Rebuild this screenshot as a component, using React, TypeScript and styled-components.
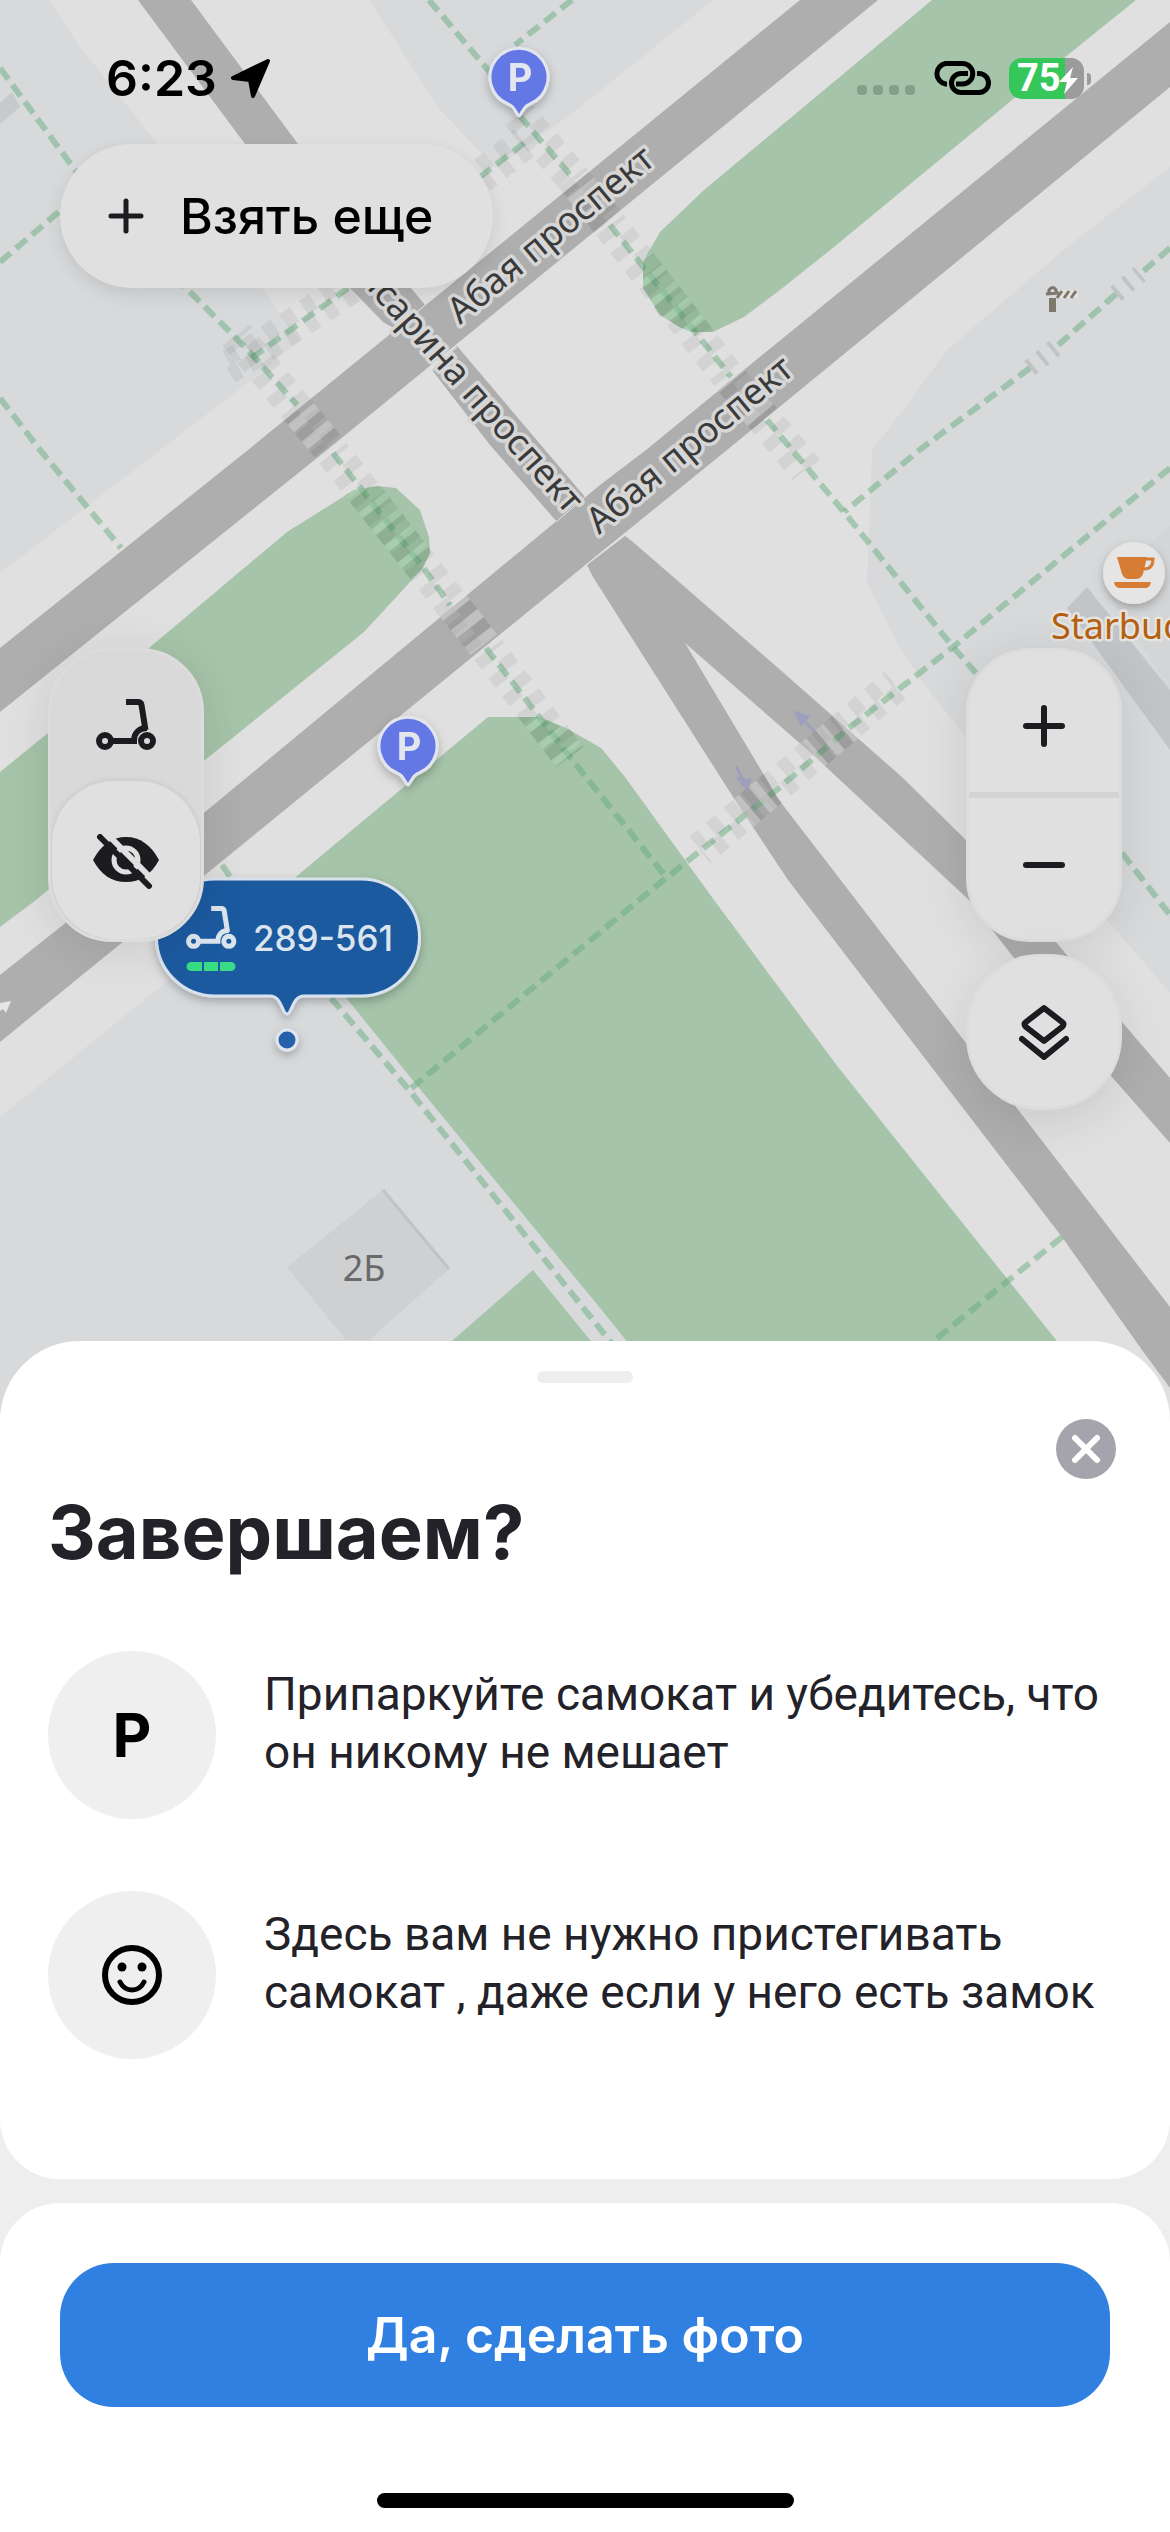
import React from "react";
import styled, { createGlobalStyle } from "styled-components";

const colors = {
  ink: "#1c1c20",
  panel: "#e0e0e0",
  panelMuted: "#d9d9d9",
  ground: "#e0e0e0",
  block: "#d7d9db",
  road: "#aeaeae",
  park: "#a6c4aa",
  blue: "#2f80e1",
  bubble: "#1f5aa0",
  pin: "#6478e4",
};

const GlobalStyle = createGlobalStyle`
  *, *::before, *::after { box-sizing: border-box; }
  body {
    margin: 0;
    background: #ffffff;
    color: #232228;
    font-family: Inter, Roboto, "Liberation Sans", sans-serif;
  }
  button { font: inherit; color: inherit; border: 0; padding: 0; cursor: pointer; }
  svg { display: block; }
`;

const Screen = styled.div`
  position: relative;
  display: flex;
  flex-direction: column;
  min-height: 100vh;
  overflow: hidden;
  background: #ffffff;
`;

const MapLayer = styled.div`
  position: absolute;
  inset: 0 0 auto 0;
  svg { width: 100%; height: auto; }
  text { font-family: "Noto Sans", sans-serif; }
`;

const Overlay = styled.div`
  position: relative;
  flex: 1;
  display: flex;
  flex-direction: column;
  align-items: stretch;
`;

const StatusBar = styled.header`
  display: flex;
  justify-content: space-between;
  align-items: center;
  height: 144px;
  padding: 12px 86px 0 106px;
`;

const StatusGroup = styled.div<{ $gap: number }>`
  display: flex;
  align-items: center;
  gap: ${(p) => p.$gap}px;
`;

const Clock = styled.time`
  font-size: 50px;
  font-weight: 600;
  line-height: 60px;
  color: #000;
`;

const SignalDots = styled.div`
  display: flex;
  gap: 6px;
  padding-top: 24px;
`;

const SignalDot = styled.i`
  width: 10px;
  height: 10px;
  border-radius: 4px;
  background: #839f87;
`;

const Battery = styled.div`
  position: relative;
  width: 75px;
  height: 41px;
  padding-left: 8px;
  border-radius: 13px;
  background: linear-gradient(to right, #35c759 75%, #9a9b9a 75%);
  color: #fff;
  font: 700 38px/41px Roboto, Inter, sans-serif;
  &::after {
    content: "";
    position: absolute;
    right: -7px;
    top: 15px;
    width: 4px;
    height: 12px;
    border-radius: 0 4px 4px 0;
    background: #9a9b9a;
  }
  svg { position: absolute; inset: 0; }
`;

const TakeMoreButton = styled.button`
  display: flex;
  align-items: center;
  align-self: flex-start;
  gap: 36px;
  height: 144px;
  margin-left: 60px;
  padding: 0 60px 0 48px;
  border-radius: 72px;
  background: ${colors.panel};
  box-shadow: 0 6px 18px rgba(0, 0, 0, 0.1);
  color: #000;
  font-size: 50px;
  font-weight: 500;
`;

const Controls = styled.div`
  display: flex;
  justify-content: space-between;
  align-items: flex-start;
  padding: 360px 48px 230px;
`;

const ControlColumn = styled.div`
  display: flex;
  flex-direction: column;
  gap: 12px;
`;

const Pill = styled.div<{ $muted?: boolean }>`
  display: flex;
  flex-direction: column;
  width: 156px;
  height: 294px;
  padding: ${(p) => (p.$muted ? "0 1px" : "0")};
  overflow: hidden;
  border: 3px solid #dcdcdc;
  border-radius: 64px;
  background: ${(p) => (p.$muted ? colors.panelMuted : colors.panel)};
  box-shadow: 0 6px 48px rgba(0, 0, 0, 0.1);
`;

const PillButton = styled.button`
  display: grid;
  place-items: center;
  flex: 1;
  padding-bottom: 8px;
  background: transparent;
`;

const ScooterButton = styled(PillButton)`
  padding: 16px 0 0;
`;

const HideButton = styled(PillButton)`
  flex: 0 0 158px;
  padding: 4px 0 0;
  border-radius: 62px;
  background: ${colors.panel};
  box-shadow: 0 0 6px rgba(0, 0, 0, 0.1);
`;

const ZoomInButton = styled(PillButton)`
  flex: 0 0 147px;
  padding: 8px 0 0;
  border-bottom: 6px solid #d3d3d3;
`;

const RoundButton = styled.button`
  display: grid;
  place-items: center;
  width: 156px;
  height: 156px;
  border: 3px solid #dcdcdc;
  border-radius: 74px;
  background: ${colors.panel};
  box-shadow: 0 12px 48px rgba(0, 0, 0, 0.1);
`;

const Sheet = styled.section`
  position: relative;
  display: flex;
  flex-direction: column;
  gap: 24px;
  border-radius: 80px 80px 0 0;
  overflow: hidden;
  background: #eeeeee;
`;

const InfoCard = styled.div`
  display: flex;
  flex-direction: column;
  padding: 30px 48px 120px;
  border-radius: 0 0 60px 60px;
  background: #ffffff;
`;

const Handle = styled.div`
  align-self: center;
  width: 96px;
  height: 12px;
  border-radius: 6px;
  background: #eeeeee;
`;

const CloseButton = styled.button`
  display: grid;
  place-items: center;
  align-self: flex-end;
  width: 60px;
  height: 60px;
  margin: 36px 6px 0 0;
  border-radius: 50%;
  background: #a5a3ab;
`;

const Title = styled.h1`
  margin: 6px 0 72px;
  font-size: 74px;
  font-weight: 700;
  line-height: 94px;
`;

const Tips = styled.ul`
  display: flex;
  flex-direction: column;
  gap: 72px;
  margin: 0;
  padding: 0;
  list-style: none;
`;

const Tip = styled.li`
  display: flex;
  align-items: flex-start;
  gap: 48px;
`;

const TipBadge = styled.span`
  display: grid;
  place-items: center;
  flex: none;
  width: 168px;
  height: 168px;
  border-radius: 50%;
  background: #efefef;
  color: #000;
  font-size: 60px;
  font-weight: 700;
`;

const TipText = styled.p`
  margin: 0;
  padding-top: 14px;
  font-family: Roboto, Inter, sans-serif;
  font-size: 46px;
  line-height: 58px;
`;

const ActionCard = styled.div`
  display: flex;
  flex-direction: column;
  gap: 86px;
  padding: 60px 60px 24px;
  border-radius: 60px 60px 0 0;
  background: #ffffff;
`;

const PrimaryButton = styled.button`
  height: 144px;
  border-radius: 54px;
  background: ${colors.blue};
  color: #ffffff;
  font-size: 50px;
  font-weight: 600;
`;

const HomeBar = styled.div`
  align-self: center;
  width: 417px;
  height: 15px;
  border-radius: 8px;
  background: #000;
`;

const ScooterShape = ({ color }: { color: string }) => (
  <g fill="none" stroke={color} strokeWidth="6">
    <circle cx="9" cy="42" r="6" />
    <circle cx="51" cy="42" r="6" />
    <path d="M15 42H38C38 34 43 29 51 29" />
    <path d="M30 3H42Q45 3 45.500 6L49.500 31" />
  </g>
);

const ParkingPin = ({ x, y }: { x: number; y: number }) => (
  <g transform={`translate(${x} ${y})`} filter="url(#markerShadow)">
    <path
      d="M0 39C-2 39-4 29-11 27A29 29 0 1 1 11 27C4 29 2 39 0 39Z"
      fill={colors.pin}
      stroke="#e3e5ee"
      strokeWidth="3"
    />
    <text x="1" y="14" textAnchor="middle" fontSize="38" fontWeight="700" fill="#e4e6ee" style={{ fontFamily: "Inter, sans-serif" }}>
      P
    </text>
  </g>
);

const parks = [
  "M932 0H1136L1012 100L834 247L780 290L744 317L713 332H692L681 328L660 315L643 288V263L648 253L660 232L704 190Z",
  "M354 490L377 486L396 488L420 510L429 537L430 553L423 568L364 632L205 760L36 900L0 927V772L48 733L149 648L287 532Z",
  "M488 717H540L568 729L601 748L625 777L714 900L838 1067L1080 1370H650L600 1308L415 1083L348 1000L268 900Z",
  "M533 1270L453 1340L440 1400H640L590 1340Z",
];

const roads = [
  "M138 0H191L298 144L411 288L425 305L397 330L383 322L350 288L245 144Z",
  "M432 370L457 346L585 497L557 522L490 445Z",
  "M800 0H878L327 450L0 712V648L248 450Z",
  "M1170 22V87L727 450L600 553L205 875L0 1042V975L205 812L600 485L646 450Z",
  "M587 565L625 536L633 542L777 667L903 778L966 840L1056 942L1122 1022L1170 1078V1143L1112 1077L1014 958L969 900L811 753L685 643L779 800L856 900L966 1043L1016 1107L1170 1307V1388L1142 1350L1062 1237L788 880L735 800L593 577Z",
];

const footpaths = [
  "M0 68L75 170L186 288L245 347L297 405",
  "M0 262L61 210",
  "M0 398L40 450L121 548M222 865L231 878M331 998L409 1090L625 1360",
  "M429 0L488 70L519 115L572 177M610 225L731 377M767 420L844 512L953 647L976 673M1122 853L1170 915",
  "M572 0L515 45",
  "M524 143L480 177M348 288L249 360",
  "M1170 248L1140 274M1116 294L1056 347M1030 368L922 448L844 512",
  "M1170 468L953 647L849 728L779 788L685 863L639 900L409 1090",
  "M333 453L425 570L450 605M486 648L570 757L666 877",
  "M1062 1237L925 1348",
];

const crossings = [
  { d: "M519 115L572 177", falling: true },
  { d: "M524 143L480 177", falling: false },
  { d: "M350 287L249 355L226 368", falling: false },
  { d: "M236 335L328 447", falling: true },
  { d: "M333 453L484 645", falling: true },
  { d: "M488 650L570 757", falling: true },
  { d: "M572 177L610 225", falling: true },
  { d: "M610 225L728 376", falling: true },
  { d: "M731 380L790 450L806 470", falling: true },
  { d: "M895 685L700 850", falling: false },
];

const Crossing = ({ d, falling }: { d: string; falling: boolean }) => (
  <g fill="none">
    <g stroke="#000" strokeOpacity="0.055" strokeWidth="17" strokeDasharray="12 11">
      <path d={d} transform={falling ? "translate(-7 5)" : "translate(5 7)"} />
      <path d={d} transform={falling ? "translate(7 -5)" : "translate(-5 -7)"} strokeDashoffset="8" />
    </g>
    <g clipPath="url(#paved)" strokeWidth="34">
      <path d={d} stroke="#000" strokeOpacity="0.04" />
      <path d={d} stroke="#fff" strokeOpacity="0.3" strokeDasharray="10 12" strokeDashoffset="8" />
    </g>
    <g clipPath="url(#lawns)" strokeWidth="34">
      <path d={d} stroke="#2a6a3a" strokeOpacity="0.12" />
      <path d={d} stroke="#d8ffe0" strokeOpacity="0.28" strokeDasharray="7 14" />
    </g>
  </g>
);

const MapDrawing = () => (
  <svg viewBox="0 0 1170 1500" role="img" aria-label="Карта">
    <defs>
      <filter id="markerShadow" x="-30%" y="-30%" width="160%" height="170%">
        <feDropShadow dx="0" dy="4" stdDeviation="5" floodOpacity="0.25" />
      </filter>
      <clipPath id="paved">
        {roads.map((d) => (
          <path key={d} d={d} />
        ))}
      </clipPath>
      <clipPath id="lawns">
        {parks.map((d) => (
          <path key={d} d={d} />
        ))}
      </clipPath>
    </defs>
    <rect width="1170" height="1500" fill={colors.ground} />

    <g fill={colors.block}>
      <path d="M0 0H50L77 43L153 138L262 288L300 340L245 385L0 573Z" />
      <path d="M369 0H713L570 115L496 168L440 110Z" />
      <path d="M1170 167L1067 247L947 350L903 410L872 450L867 583L899 647L926 687L966 737L1113 927L1170 993Z" />
      <path d="M0 1117L165 983L268 900L650 1370L650 1500H0Z" />
    </g>

    <path d="M0 103L12 92L20 107L0 124Z" fill="#c8c9ca" />
    <path d="M1106 590L1170 525V690Z" fill="#d3d5d6" />
    <path d="M1087 587L1067 608L1170 750V690Z" fill="#c2c5c7" />
    <path d="M383 1190L449 1269L369 1340H346L287 1267Z" fill="#cfd0d1" />
    <path d="M383 1190L449 1269" stroke="#c1c2c3" strokeWidth="3" />

    <g fill={colors.park}>
      {parks.map((d) => (
        <path key={d} d={d} />
      ))}
    </g>
    <g fill={colors.road}>
      {roads.map((d) => (
        <path key={d} d={d} />
      ))}
    </g>
    <path d="M397 330L425 305M432 371L457 347M556 522L587 495M586 565L626 533" stroke="#e4e4e4" strokeWidth="1" />

    {footpaths.map((d) => (
      <path key={d} d={d} fill="none" stroke="#5faa77" strokeOpacity="0.46" strokeWidth="6" strokeDasharray="14 7" />
    ))}
    {crossings.map((c) => (
      <Crossing key={c.d} {...c} />
    ))}
    <path
      d="M1116 294L1140 274M1030 368L1056 347"
      fill="none"
      stroke="#000"
      strokeOpacity="0.1"
      strokeWidth="18"
      strokeDasharray="4 10"
    />

    <g fill="#9a9cc0" stroke="#9a9cc0" strokeWidth="3" opacity="0.8">
      <path d="M796 713L808 717L801 724Z" />
      <path d="M801 718L814 731" />
      <path d="M739 779L750 780L747 789Z" />
      <path d="M736 766L744 782" />
    </g>
    <path d="M0 1003L11 1001L6 1013L3 1009L0 1011Z" fill="#e6e6e6" />

    <g transform="translate(1045 286)">
      <rect x="4" y="12" width="7" height="14" fill="#7d776c" />
      <path d="M4 8V4Q8-1 11 4V8M1 8L14 7" fill="none" stroke="#7d776c" strokeWidth="3" />
      <path d="M14 8H33" stroke="#e6e3dd" strokeWidth="8" />
      <path d="M12 12L17 5M19 12L24 5M26 12L31 5" stroke="#7d776c" strokeWidth="3" />
    </g>

    <g fontSize="36" fill="#3a3a3a" stroke="#d6d6d6" strokeWidth="7" strokeLinejoin="round" paintOrder="stroke">
      <text transform="translate(460 325) rotate(-39.500)">Абая проспект</text>
      <text transform="translate(599 535) rotate(-39.500)">Абая проспект</text>
      <text transform="translate(567 515) rotate(48.500)" textAnchor="end">Алтынсарина проспект</text>
    </g>
    <text x="364" y="1281" textAnchor="middle" fontSize="36" fill="#696969">2Б</text>

    <g filter="url(#markerShadow)">
      <circle cx="1134" cy="573" r="31" fill="#e5e5e5" />
    </g>
    <g fill="#d67c35">
      <path d="M1117 557H1147L1143 574Q1141 579 1136 579H1129Q1124 579 1122 574Z" />
      <path d="M1146 559H1153Q1153 569 1144 569" fill="none" stroke="#d67c35" strokeWidth="3" />
      <path d="M1114 582H1151Q1150 588 1145 588H1120Q1115 588 1114 582Z" />
    </g>
    <text x="1134" y="639" textAnchor="middle" fontSize="36" fill="#b5600f" stroke="#e6e4e0" strokeWidth="5" strokeLinejoin="round" paintOrder="stroke">
      Starbucks
    </text>

    <ParkingPin x={519} y={77} />
    <ParkingPin x={408} y={746} />

    <g filter="url(#markerShadow)">
      <path
        d="M215 879H361A58 58 0 0 1 361 996H304C292 996 292 1014 287 1014C282 1014 282 996 270 996H215A58 58 0 0 1 215 879Z"
        fill={colors.bubble}
        stroke="#d8e2ee"
        strokeWidth="3"
      />
      <circle cx="287" cy="1040" r="10" fill="#2560ab" stroke="#dfe5ee" strokeWidth="3" />
    </g>
    <g transform="translate(186 906) scale(.84)">
      <ScooterShape color="#dce4ee" />
    </g>
    <g fill="#37dc86">
      <path d="M191 962H202V971H191A4 4 0 0 1 191 962Z" />
      <rect x="204" y="962" width="14" height="9" />
      <path d="M220 962H231A4 4 0 0 1 231 971H220Z" />
    </g>
    <text x="253" y="951" fontSize="35" fontWeight="500" fill="#dce4ee" style={{ fontFamily: "Inter, sans-serif" }}>
      289-561
    </text>
  </svg>
);

const PlusIcon = ({ size, weight }: { size: number; weight: number }) => (
  <svg width={size} height={size} viewBox={`0 0 ${size} ${size}`} aria-hidden="true">
    <path
      d={`M${size / 2} 3V${size - 3}M3 ${size / 2}H${size - 3}`}
      stroke={colors.ink}
      strokeWidth={weight}
      strokeLinecap="round"
    />
  </svg>
);

const MinusIcon = () => (
  <svg width="42" height="42" viewBox="0 0 42 42" aria-hidden="true">
    <path d="M3 21H39" stroke={colors.ink} strokeWidth="6" strokeLinecap="round" />
  </svg>
);

const ScooterIcon = () => (
  <svg width="60" height="51" viewBox="0 0 60 51" aria-hidden="true">
    <ScooterShape color={colors.ink} />
  </svg>
);

const EyeOffIcon = () => (
  <svg width="66" height="56" viewBox="0 0 66 56" aria-hidden="true">
    <path d="M0 26C8 11 19 3 33 3S58 11 66 26C58 41 47 48 33 48S8 41 0 26Z" fill={colors.ink} />
    <circle cx="33" cy="26" r="12" fill="none" stroke={colors.panel} strokeWidth="5" />
    <path d="M14 0L63 49" stroke={colors.panel} strokeWidth="6" />
    <path d="M7 3L56 52" stroke={colors.ink} strokeWidth="6" strokeLinecap="round" />
  </svg>
);

const LayersIcon = () => (
  <svg width="50" height="56" viewBox="0 0 50 56" fill="none" stroke={colors.ink} strokeWidth="6" strokeLinecap="round" strokeLinejoin="round" aria-hidden="true">
    <path d="M25 4L43 18Q46 20 43 23L25 37L7 23Q4 20 7 18Z" />
    <path d="M3 35L25 53L47 35" />
  </svg>
);

const LocationIcon = () => (
  <svg width="39" height="39" viewBox="0 0 39 39" aria-hidden="true">
    <path d="M37 2L2 19L19 21L22 37Z" stroke="#000" strokeWidth="4" strokeLinejoin="round" />
  </svg>
);

const LinkIcon = () => (
  <svg width="58" height="34" viewBox="0 0 58 34" fill="none" stroke="#000" strokeWidth="5" aria-hidden="true">
    <path d="M14 23H12.500A10.400 10.400 0 0 1 12.500 2.500H29.500A10.200 10.200 0 0 1 29.500 23H23" />
    <path d="M35 12.500H28A9.500 9.500 0 0 0 28 31.500H46A9.500 9.500 0 0 0 46 12.500H44" />
  </svg>
);

const SmileIcon = () => (
  <svg width="62" height="62" viewBox="0 0 62 62" fill="none" stroke="#000" aria-hidden="true">
    <circle cx="31" cy="31" r="27" strokeWidth="6" />
    <circle cx="21" cy="23" r="4.500" fill="#000" stroke="none" />
    <circle cx="41" cy="23" r="4.500" fill="#000" stroke="none" />
    <path d="M19 38Q23 46 31 46T43 38" strokeWidth="5" strokeLinecap="round" />
  </svg>
);

export default function App() {
  return (
    <>
      <GlobalStyle />
      <Screen>
        <MapLayer>
          <MapDrawing />
        </MapLayer>

        <Overlay>
          <StatusBar>
            <StatusGroup $gap={14}>
              <Clock>6:23</Clock>
              <LocationIcon />
            </StatusGroup>
            <StatusGroup $gap={18}>
              <SignalDots>
                <SignalDot />
                <SignalDot />
                <SignalDot />
                <SignalDot />
              </SignalDots>
              <LinkIcon />
              <Battery>
                75
                <svg width="75" height="41" viewBox="0 0 75 41" aria-hidden="true">
                  <path d="M64 9L50 24H58L55 36L69 20H61Z" fill="#fff" />
                </svg>
              </Battery>
            </StatusGroup>
          </StatusBar>

          <TakeMoreButton type="button">
            <PlusIcon size={36} weight={5} />
            Взять еще
          </TakeMoreButton>

          <Controls>
            <Pill $muted>
              <ScooterButton type="button" aria-label="Самокаты">
                <ScooterIcon />
              </ScooterButton>
              <HideButton type="button" aria-label="Скрыть самокаты">
                <EyeOffIcon />
              </HideButton>
            </Pill>
            <ControlColumn>
              <Pill>
                <ZoomInButton type="button" aria-label="Приблизить">
                  <PlusIcon size={42} weight={6} />
                </ZoomInButton>
                <PillButton type="button" aria-label="Отдалить">
                  <MinusIcon />
                </PillButton>
              </Pill>
              <RoundButton type="button" aria-label="Слои карты">
                <LayersIcon />
              </RoundButton>
            </ControlColumn>
          </Controls>
        </Overlay>

        <Sheet>
          <InfoCard>
            <Handle />
            <CloseButton type="button" aria-label="Закрыть">
              <svg width="30" height="30" viewBox="0 0 30 30" aria-hidden="true">
                <path d="M4 4L26 26M26 4L4 26" stroke="#fff" strokeWidth="6" strokeLinecap="round" />
              </svg>
            </CloseButton>
            <Title>Завершаем?</Title>
            <Tips>
              <Tip>
                <TipBadge aria-hidden="true">P</TipBadge>
                <TipText>Припаркуйте самокат и убедитесь, что он никому не мешает</TipText>
              </Tip>
              <Tip>
                <TipBadge>
                  <SmileIcon />
                </TipBadge>
                <TipText>Здесь вам не нужно пристегивать самокат , даже если у него есть замок</TipText>
              </Tip>
            </Tips>
          </InfoCard>
          <ActionCard>
            <PrimaryButton type="button">Да, сделать фото</PrimaryButton>
            <HomeBar />
          </ActionCard>
        </Sheet>
      </Screen>
    </>
  );
}
